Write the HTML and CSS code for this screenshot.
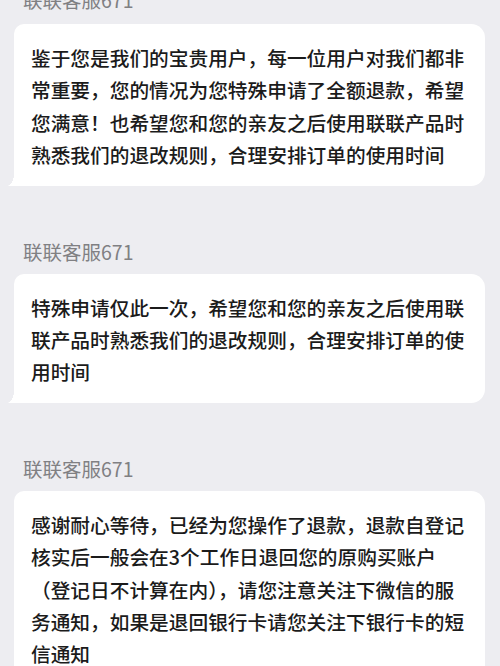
FILE: index.html
```html
<!DOCTYPE html>
<html lang="zh-CN">
<head>
<meta charset="utf-8">
<title>联联客服</title>
<link rel="stylesheet" href="styles.css">
</head>
<body>
<div class="chat">
  <div class="msg">
    <div class="name">联联客服671</div>
    <div class="bubble">鉴于您是我们的宝贵用户，每一位用户对我们都非常重要，您的情况为您特殊申请了全额退款，希望您满意！也希望您和您的亲友之后使用联联产品时熟悉我们的退改规则，合理安排订单的使用时间</div>
  </div>
  <div class="msg">
    <div class="name">联联客服671</div>
    <div class="bubble">特殊申请仅此一次，希望您和您的亲友之后使用联联产品时熟悉我们的退改规则，合理安排订单的使用时间</div>
  </div>
  <div class="msg">
    <div class="name">联联客服671</div>
    <div class="bubble">感谢耐心等待，已经为您操作了退款，退款自登记核实后一般会在3个工作日退回您的原购买账户（登记日不计算在内），请您注意关注下微信的服务通知，如果是退回银行卡请您关注下银行卡的短信通知</div>
  </div>
</div>
</body>
</html>
```
FILE: styles.css
```css
html, body {
  margin: 0;
  padding: 0;
  background: #ededf1;
  overflow: hidden;
}
body {
  font-family: "Noto Sans CJK SC", "Noto Sans", sans-serif;
  color: #1b1b1b;
}
.chat {
  display: flex;
  flex-direction: column;
  gap: 54px;
  margin-top: -12px;
  padding: 0 15px 0 14px;
}
.msg {
  display: flex;
  flex-direction: column;
  gap: 10px;
}
.msg:first-child {
  gap: 12px;
}
.name {
  font-size: 19.5px;
  line-height: 24px;
  color: #808083;
  padding-left: 9px;
}
.bubble {
  position: relative;
  background: #ffffff;
  border-radius: 10px 14px 14px 0;
  padding: 18px 17px 14px 17px;
  font-size: 19.7px;
  font-weight: 500;
  line-height: 32.4px;
}
.bubble::before {
  content: "";
  position: absolute;
  left: -7px;
  bottom: 0;
  width: 7px;
  height: 12px;
  background: radial-gradient(7px 12px at 0 0, transparent 97%, #ffffff 100%);
}
```
